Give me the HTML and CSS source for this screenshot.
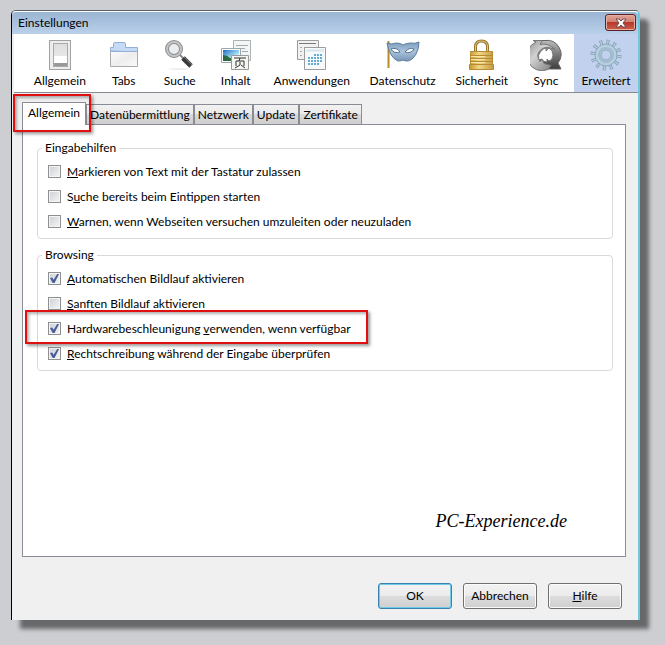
FILE: index.html
```html
<!DOCTYPE html>
<html lang="de">
<head>
    <meta charset="UTF-8">
    <title>Einstellungen</title>
    <meta name="viewport" content="width=device-width, initial-scale=1">
    <link rel="stylesheet" href="styles.css">
</head>
<body>
<div class="window">
  <header class="titlebar">
    <h1>Einstellungen</h1>
    <button class="close" type="button" aria-label="Schließen">
      <svg width="12" height="10" viewBox="0 0 12 10"><path d="M1 1h3l2 2 2-2h3L8 5l3 4H8L6 7 4 9H1l3-4z" fill="#fff" stroke="#6b4a50" stroke-width="1"/></svg>
    </button>
  </header>

  <nav class="toolbar">
    <button type="button">
      <svg width="32" height="32" viewBox="0 0 32 32">
        <defs><linearGradient id="sw" x2="0" y2="1"><stop offset="0" stop-color="#dedede"/><stop offset="1" stop-color="#eee"/></linearGradient></defs>
        <rect x="5.500" y="1.500" width="21" height="29" fill="#ededed" stroke="#a2a2a2"/>
        <rect x="9.500" y="4.500" width="14" height="23" fill="url(#sw)" stroke="#aaa"/>
        <path d="M10 17h13v7H10z" fill="#fff"/><path d="M10 24h13v3H10z" fill="#999"/>
      </svg>
      <span>Allgemein</span>
    </button>
    <button type="button">
      <svg width="32" height="32" viewBox="0 0 32 32">
        <defs><linearGradient id="tb" x2="1" y2="1"><stop offset="0" stop-color="#fcfcfc"/><stop offset=".5" stop-color="#ededed"/><stop offset="1" stop-color="#fafafa"/></linearGradient></defs>
        <path d="M2.500 12V8.500h3v-4q0-1 1-1h10q1 0 1 1v4h12V13z" fill="#c5daf5" stroke="#91afd8"/>
        <path d="M2.500 12.500h27v15h-27z" fill="url(#tb)" stroke="#aaa"/>
        <path d="M3 12.500h26" stroke="#91afd8"/>
      </svg>
      <span>Tabs</span>
    </button>
    <button type="button">
      <svg width="32" height="32" viewBox="0 0 32 32">
        <ellipse cx="15" cy="30" rx="10" ry="1" fill="#eee"/>
        <path d="M16 16l4 4" stroke="#888" stroke-width="2"/>
        <path d="M19 19l8 8" stroke="#3b3b3b" stroke-width="5"/>
        <path d="M20 18l8 8" stroke="#777" stroke-width="1"/>
        <circle cx="10" cy="10" r="7" fill="#e9edf1" stroke="#8d8d8d" stroke-width="4"/>
        <circle cx="10" cy="10" r="7" fill="none" stroke="#c4c4c4" stroke-width="2"/>
      </svg>
      <span>Suche</span>
    </button>
    <button type="button">
      <svg width="32" height="32" viewBox="0 0 32 32">
        <defs><linearGradient id="sky" x2="1" y2="1"><stop offset="0" stop-color="#1c6cc4"/><stop offset=".6" stop-color="#a5def4"/><stop offset="1" stop-color="#fff"/></linearGradient></defs>
        <path d="M13.500 1.500h17v20h-17z" fill="#f4f6f6" stroke="#aab2b5"/>
        <path d="M16 6.500h12M19 9.500h6M22 12.500h6" stroke="#a0a8ad"/>
        <path d="M1.500 9.500h19v14h-19z" fill="#fff" stroke="#9ca6ac"/>
        <path d="M3 11h16v11H3z" fill="url(#sky)"/>
        <path d="M3 16q4 0 7 3l9 1v2H3z" fill="#2e6840"/>
        <path d="M11.500 16.500h17v14h-17z" fill="#f5f5f2" stroke="#999"/>
        <path d="M14 19h12M20 19l-1 3M16 27v-5h8v5M20 23v3l-5 3M21 26l4 3" fill="none" stroke="#333"/>
      </svg>
      <span>Inhalt</span>
    </button>
    <button type="button">
      <svg width="32" height="32" viewBox="0 0 32 32">
        <path d="M1.500 1.500h21v19h-21z" fill="#f1f1f1" stroke="#9c9c9c"/>
        <path d="M3 4.500h17" stroke="#777"/>
        <path d="M4 8.500h2M8 8.500h9M4 12.500h2M4 16.500h2" stroke="#aaa"/>
        <path d="M8.500 8.500h21v22h-21z" fill="#f7f9fa" stroke="#9c9c9c"/>
        <path d="M10 11.500h18" stroke="#d7e5ee" stroke-width="2"/>
        <path d="M18 16h9M12 19h15M12 22h15M12 25h12" stroke="#61acd4" stroke-width="2" stroke-dasharray="2 1"/>
      </svg>
      <span>Anwendungen</span>
    </button>
    <button type="button">
      <svg width="36" height="32" viewBox="0 0 36 32">
        <defs><linearGradient id="mk" x2="0" y2="1"><stop offset="0" stop-color="#7c9dbf"/><stop offset=".5" stop-color="#a9c2da"/><stop offset="1" stop-color="#7797b6"/></linearGradient></defs>
        <path d="M3.500 2v27" stroke="#b28d2a" stroke-width="2"/>
        <path d="M2 4q5 2 9 0 5 0 7 2 3-2 8-2 4 1 8-1 0 7-3 12-4 7-9 7-2 0-4-1-2 1-5 1-8-3-11-18z" fill="url(#mk)" stroke="#5c7d9d"/>
        <path d="M6 10q6-2 9 3-6 2-9-3M20 13q4-5 9-3-3 5-9 3" fill="#fff" stroke="#547696"/>
      </svg>
      <span>Datenschutz</span>
    </button>
    <button type="button">
      <svg width="32" height="32" viewBox="0 0 32 32">
        <defs><linearGradient id="lk"><stop offset="0" stop-color="#c6972d"/><stop offset=".4" stop-color="#f1d783"/><stop offset="1" stop-color="#c49a45"/></linearGradient></defs>
        <path d="M9.500 15V8q0-6 6-6t6 6v7" fill="none" stroke="#98752c" stroke-width="3"/>
        <path d="M9.500 15V8q0-6 6-6t6 6v7" fill="none" stroke="#e5cc85" stroke-width="1"/>
        <path d="M4.500 12.500h22v13h1v5h-24v-5h1z" fill="url(#lk)" stroke="#b58b34"/>
        <path d="M5 16.500h21M5 19.500h21M5 22.500h21M4 25.500h23" stroke="#b98b30"/>
        <path d="M5 17.500h14M5 20.500h14M5 23.500h14" stroke="#f8e6a8"/>
      </svg>
      <span>Sicherheit</span>
    </button>
    <button type="button">
      <svg width="32" height="32" viewBox="0 0 32 32">
        <defs>
          <linearGradient id="sy" x2="1" y2="1"><stop offset="0" stop-color="#8f8f8f"/><stop offset=".4" stop-color="#d2d2d2"/><stop offset="1" stop-color="#777"/></linearGradient>
          <linearGradient id="sz" x2="0" y2="1"><stop offset="0" stop-color="#bbb"/><stop offset=".5" stop-color="#777"/><stop offset="1" stop-color="#3c3c3c"/></linearGradient>
        </defs>
        <path d="M6 1.500h9A14 14 0 0 1 28 24l3 6H18a14 14 0 0 1-14-22z" fill="url(#sz)" stroke="#666"/>
        <path d="M6 3l-3-1.500h9l-2 4q8-2 15 5-9-4-14 0-6 5-1 12l2-2 2 4 7 2-3 4A14 14 0 0 1 6 3z" fill="url(#sy)" stroke="#777"/>
        <path d="M11 12q3-3 5-3v3l3-3q4 2 4 7t-4 6l-2-2v3q-4 0-5-3l-3 1q-2-5 2-9z" fill="#fff" stroke="#777"/>
      </svg>
      <span>Sync</span>
    </button>
    <button type="button" class="active">
      <svg width="32" height="32" viewBox="0 0 32 32">
        <circle cx="16" cy="16" r="13" fill="none" stroke="#8ba6bd" stroke-width="5" stroke-dasharray="3 3.807"/>
        <circle cx="16" cy="16" r="13" fill="none" stroke="#bad2e0" stroke-width="4" stroke-dasharray="1 5.807" stroke-dashoffset="-1"/>
        <circle cx="16" cy="16" r="11" fill="#b7d0df" stroke="#8ba6bd" stroke-width="1"/>
        <circle cx="16" cy="16" r="7" fill="none" stroke="#a0bbcf" stroke-width="2"/>
        <circle cx="16" cy="16" r="5" fill="#c2d2ee" stroke="#8ba6bd" stroke-width="1"/>
      </svg>
      <span>Erweitert</span>
    </button>
  </nav>

  <main class="content">
    <div class="tabs" role="tablist">
      <button type="button" role="tab" class="selected" aria-selected="true">Allgemein</button>
      <button type="button" role="tab">Datenübermittlung</button>
      <button type="button" role="tab">Netzwerk</button>
      <button type="button" role="tab">Update</button>
      <button type="button" role="tab">Zertifikate</button>
      <span class="marker marker-tab"></span>
    </div>

    <div class="panel">
      <fieldset>
        <legend>Eingabehilfen</legend>
        <label><input type="checkbox"><span><u>M</u>arkieren von Text mit der Tastatur zulassen</span></label>
        <label><input type="checkbox"><span>S<u>u</u>che bereits beim Eintippen starten</span></label>
        <label><input type="checkbox"><span><u>W</u>arnen, wenn Webseiten versuchen umzuleiten oder neuzuladen</span></label>
      </fieldset>
      <fieldset>
        <legend>Browsing</legend>
        <label><input type="checkbox" checked><span><u>A</u>utomatischen Bildlauf aktivieren</span></label>
        <label><input type="checkbox"><span><u>S</u>anften Bildlauf aktivieren</span></label>
        <label class="marked"><input type="checkbox" checked><span>Hardwarebeschleunigung <u>v</u>erwenden, wenn verfügbar</span><i class="marker marker-row"></i></label>
        <label><input type="checkbox" checked><span><u>R</u>echtschreibung während der Eingabe überprüfen</span></label>
      </fieldset>
      <p class="signature">PC-Experience.de</p>
    </div>

    <div class="buttons">
      <button type="button" class="default">OK</button>
      <button type="button">Abbrechen</button>
      <button type="button"><span><u>H</u>ilfe</span></button>
    </div>
  </main>
</div>
</body>
</html>
```
FILE: styles.css
```css
* {
  box-sizing: border-box;
}

body {
  display: flex;
  min-height: 100vh;
  margin: 0;
  padding: 10px 25px 25px 11px;
  background-color: #cdced2;
  color: #000;
  font: 12px/16px Lato, "Open Sans", sans-serif;
}

button {
  font: inherit;
  color: inherit;
}

.window {
  flex: 1;
  display: flex;
  flex-direction: column;
  min-width: 0;
  border-left: 1px solid #000;
  border-right: 2px solid #70c8dc;
  border-top: 1px solid #56616c;
  border-radius: 5px 5px 0 0;
  background-color: #f0f0f0;
  box-shadow: 9px 9px 4px #66686a;
}

.titlebar {
  display: flex;
  justify-content: space-between;
  height: 23px;
  padding: 0 2px 0 6px;
  border-top: 1px solid #fff;
  border-radius: 4px 4px 0 0;
  background: linear-gradient(#9ab4d3, #b9d0e9);
}

.titlebar h1 {
  margin: 0;
  font-size: 12px;
  font-weight: normal;
  line-height: 22px;
}

.close {
  display: flex;
  align-items: center;
  justify-content: center;
  width: 31px;
  height: 17px;
  margin-top: 2px;
  padding: 0;
  border: 1px solid #592126;
  border-radius: 3px;
  background: linear-gradient(#e1a598, #d18173 45%, #b7392c 50%, #cc604d);
  box-shadow: inset 0 0 0 1px #e8b0a5;
}

.toolbar {
  display: flex;
  height: 59px;
  margin: 0 0 0 2px;
  padding-left: 10px;
  border-bottom: 1px solid #868b91;
  background-color: #fff;
}

.toolbar button {
  display: flex;
  flex-direction: column;
  align-items: center;
  gap: 2px;
  min-width: 56px;
  padding: 5px 10px 0;
  border: none;
  background: none;
}

.toolbar .active {
  min-width: 64px;
  margin-left: auto;
  padding: 5px 7px 0;
  background-color: #c2d2ee;
}

.content {
  flex: 1;
  display: flex;
  flex-direction: column;
  padding: 9px 12px 11px 10px;
}

.tabs {
  position: relative;
  display: flex;
  align-items: flex-end;
}

.tabs button {
  height: 20px;
  padding: 0 3px;
  border: 1px solid #898c95;
  border-bottom: none;
  background: linear-gradient(#f2f2f2, #e9e9e9 50%, #d9d9d9 50%, #cfcfcf);
}

.tabs .selected {
  z-index: 1;
  height: 23px;
  margin-bottom: -1px;
  padding: 0 5px 3px;
  background: #fff;
}

.panel {
  flex: 1;
  padding: 15px 12px 0 14px;
  border: 1px solid #898c95;
  background-color: #fff;
}

fieldset {
  display: flex;
  flex-direction: column;
  min-width: 0;
  margin: 0 0 8px;
  padding: 3px 10px 4px;
  border: 1px solid #d9d9d9;
  border-radius: 4px;
}

legend {
  margin-left: -6px;
  padding: 0 3px;
}

label {
  display: flex;
  align-items: center;
  gap: 6px;
  height: 25px;
}

u {
  text-underline-offset: 1px;
}

input[type="checkbox"] {
  appearance: none;
  display: grid;
  place-items: center;
  width: 13px;
  height: 13px;
  margin: 0;
  border: 1px solid #8e8f8f;
  background: linear-gradient(135deg, #cbcfd5, #f6f6f6);
  box-shadow: inset 0 0 0 1px #f4f4f4;
}

input[type="checkbox"]:checked::before {
  content: "";
  width: 9px;
  height: 9px;
  background-color: #4a5c98;
  clip-path: polygon(0 45%, 25% 40%, 40% 65%, 80% 0, 100% 0, 50% 100%, 30% 100%);
}

.marked {
  position: relative;
}

/* red frames */
.marker {
  position: absolute;
  z-index: 2;
  border: 2px solid #e01010;
  box-shadow: 2px 2px 3px rgba(0,0,0,0.4), inset 2px 2px 3px rgba(0,0,0,0.3);
  pointer-events: none;
}

.marker-tab {
  left: -9px;
  top: -8px;
  width: 78px;
  height: 38px;
}

.marker-row {
  left: -23px;
  top: -6px;
  width: 343px;
  height: 34px;
}

.signature {
  margin: 138px 46px 0 0;
  font: italic 18px/24px "Monotype Corsiva", "Liberation Serif", serif;
  text-align: right;
}

.buttons {
  display: flex;
  justify-content: flex-end;
  gap: 11px;
  padding: 26px 4px 0 0;
}

.buttons button {
  width: 74px;
  height: 26px;
  padding: 0;
  border: 1px solid #707070;
  border-radius: 3px;
  background: linear-gradient(#f2f2f2, #ebebeb 50%, #dddddd 50%, #cfcfcf);
  box-shadow: inset 0 0 0 1px #fbfbfb;
}

.buttons .default {
  border-color: #3c7fb1;
  box-shadow: inset 0 0 0 1px #6fcbe6;
}
```
